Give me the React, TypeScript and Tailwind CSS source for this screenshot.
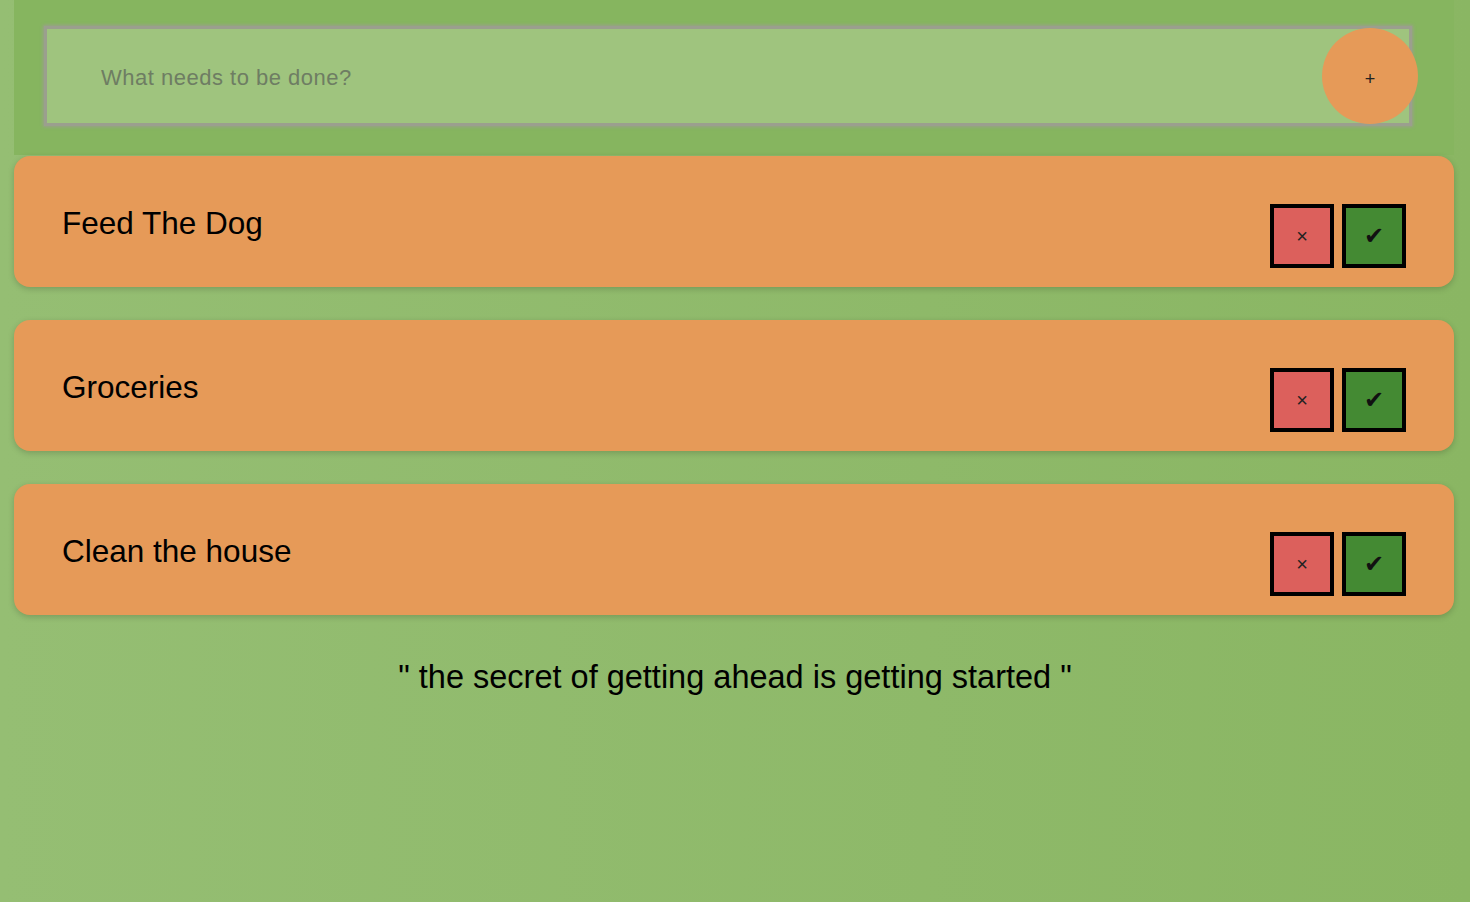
import React from 'react'

const todos = ['Feed The Dog', 'Groceries', 'Clean the house']

export default function App() {
  return (
    <div className="min-h-screen w-full bg-gradient-to-r from-[#95be73] to-[#8ab663] font-['Liberation_Sans',Arial,sans-serif]">
      <div className="ml-[14px] mr-[16px] flex items-center bg-[#86b55f] pl-[30px] pr-[36px] pt-[26px] pb-[29px]">
        <input
          className="h-[100px] flex-1 border-[3px] border-[#9b9f8e] bg-[#9fc47e] pl-[54px] pt-[3px] text-[22px] tracking-[0.5px] text-[#445] shadow-[0_0_3px_1px_#9b9f8e] outline-none placeholder:text-[#6e7d63]"
          placeholder="What needs to be done?"
        />
        <button className="-ml-[90px] flex h-[96px] w-[96px] shrink-0 items-center justify-center rounded-full bg-[#e69a58] pt-[6px] text-[18px] text-[#222]">
          +
        </button>
      </div>

      <div className="ml-[14px] mr-[16px] mt-[1px] flex flex-col gap-[33px]">
        {todos.map((t) => (
          <div
            key={t}
            className="flex h-[131px] items-start justify-between rounded-[16px] bg-[#e69a58] pl-[48px] pr-[48px] pt-[48px] shadow-[0_2px_6px_rgba(0,0,0,0.18)]"
          >
            <p className="text-[31.5px] leading-[38px] text-black">{t}</p>
            <div className="flex gap-[8px]">
              <button className="flex h-[64px] w-[64px] items-center justify-center border-4 border-black bg-[#dc605c] text-[20px] text-[#222]">
                ×
              </button>
              <button className="flex h-[64px] w-[64px] items-center justify-center border-4 border-black bg-[#448a33] text-[24px] text-[#111]">
                ✔
              </button>
            </div>
          </div>
        ))}
      </div>

      <p className="mt-[43px] text-center text-[32.5px] leading-[38px] text-black">
        " the secret of getting ahead is getting started "
      </p>
    </div>
  )
}
